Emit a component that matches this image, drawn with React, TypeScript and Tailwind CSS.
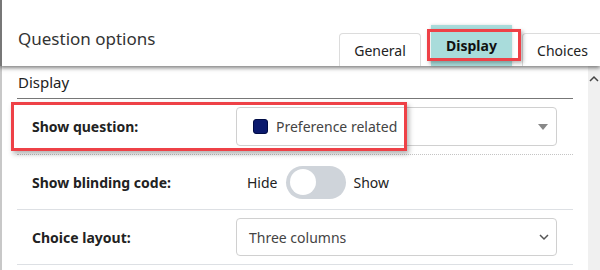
import React from 'react'

const font = { fontFamily: '"Noto Sans", "Open Sans", sans-serif' }

function Tab({ label, active }: { label: string; active?: boolean }) {
  if (active) {
    return (
      <div className="relative ml-[10px] flex h-[41px] w-[81px] items-center justify-center bg-[#a9dcdb] shadow-[0_0_3px_rgba(0,0,0,0.15)]">
        <span className="text-[14px] font-bold text-[#111]">{label}</span>
      </div>
    )
  }
  return (
    <div className="flex h-[33px] w-[82px] items-center justify-center rounded-t-[4px] border border-b-0 border-[#dcdcdc] bg-white text-[14px] text-[#222]">
      {label}
    </div>
  )
}

export default function App() {
  return (
    <div style={font} className="relative h-[270px] w-[600px] overflow-hidden bg-white">
      {/* Header */}
      <div className="relative z-10 flex h-[66px] border-l-2 border-[#777] bg-white shadow-[0_2px_4px_rgba(0,0,0,0.5)]">
        <h1 className="pl-[16px] pt-[28px] text-[17px] leading-[22px] text-[#333]">Question options</h1>
        <div className="ml-auto mr-[-2px] flex items-end">
          <Tab label="General" />
          <Tab label="Display" active />
          <div className="ml-[10px] flex h-[33px] w-[80px] items-center justify-center rounded-tl-[4px] border border-b-0 border-r-0 border-[#dcdcdc] bg-white text-[14px] text-[#222]">
            Choices
          </div>
        </div>
        {/* highlight on active tab */}
        <div className="absolute left-[425px] top-[29px] h-[32px] w-[94px] border-[3px] border-[#ee4147] shadow-[2px_2px_4px_rgba(0,0,0,0.3)]" />
      </div>

      {/* Body */}
      <div className="flex h-[204px] border-l-2 border-[#c8c8c8]">
        <div className="flex-1 pl-[15px] pr-[15px]">
          <div className="flex h-[33px] items-center border-b border-[#777] pl-px text-[15px] text-[#222]">
            Display
          </div>

          <div className="relative flex h-[56px] items-center border-b border-dotted border-[#c4c4c4]">
            <div className="absolute left-[-6px] top-[3px] h-[49px] w-[396px] border-[3px] border-[#ee4147] shadow-[2px_3px_5px_rgba(0,0,0,0.3)]" />
            <span className="w-[219px] pl-[15px] text-[14px] font-bold text-[#222]">Show question:</span>
            <div className="flex h-[39px] w-[321px] items-center rounded-[4px] border border-[#d0d0d0] pl-[16px] pr-[8px]">
              <span className="h-[15px] w-[15px] rounded-[3px] border border-[#000c45] bg-[#0b1a6e]" />
              <span className="ml-[8px] text-[14px] text-[#444]">Preference related</span>
              <svg className="ml-auto" width="10" height="6" viewBox="0 0 10 6">
                <path d="M0 0h10L5 6z" fill="#888" />
              </svg>
            </div>
          </div>

          <div className="flex h-[55px] items-center border-b border-[#dde0e4]">
            <span className="w-[230px] pl-[15px] text-[14px] font-bold text-[#222]">Show blinding code:</span>
            <span className="text-[14px] text-[#222]">Hide</span>
            <div className="ml-[8px] flex h-[33px] w-[60px] items-center rounded-full bg-[#cfd4da] pl-[4px]">
              <span className="h-[26px] w-[26px] rounded-full bg-white" />
            </div>
            <span className="ml-[8px] text-[14px] text-[#222]">Show</span>
          </div>

          <div className="flex h-[55px] items-center border-b border-[#dde0e4]">
            <span className="w-[219px] pl-[15px] text-[14px] font-bold text-[#222]">Choice layout:</span>
            <div className="flex h-[38px] w-[321px] items-center rounded-[4px] border border-[#d0d0d0] pl-[12px] pr-[6px]">
              <span className="text-[14px] text-[#444]">Three columns</span>
              <svg className="ml-auto" width="12" height="8" viewBox="0 0 12 8">
                <path d="M2 2l4 4 4-4" stroke="#555" strokeWidth="1.5" fill="none" />
              </svg>
            </div>
          </div>
        </div>

        {/* Scrollbar */}
        <div className="w-[12px] bg-[#f0f0f0] pt-[9px]">
          <svg width="12" height="8" viewBox="0 0 12 8">
            <path d="M2 6l4-4 4 4" stroke="#444" strokeWidth="1.5" fill="none" />
          </svg>
        </div>
      </div>
    </div>
  )
}
